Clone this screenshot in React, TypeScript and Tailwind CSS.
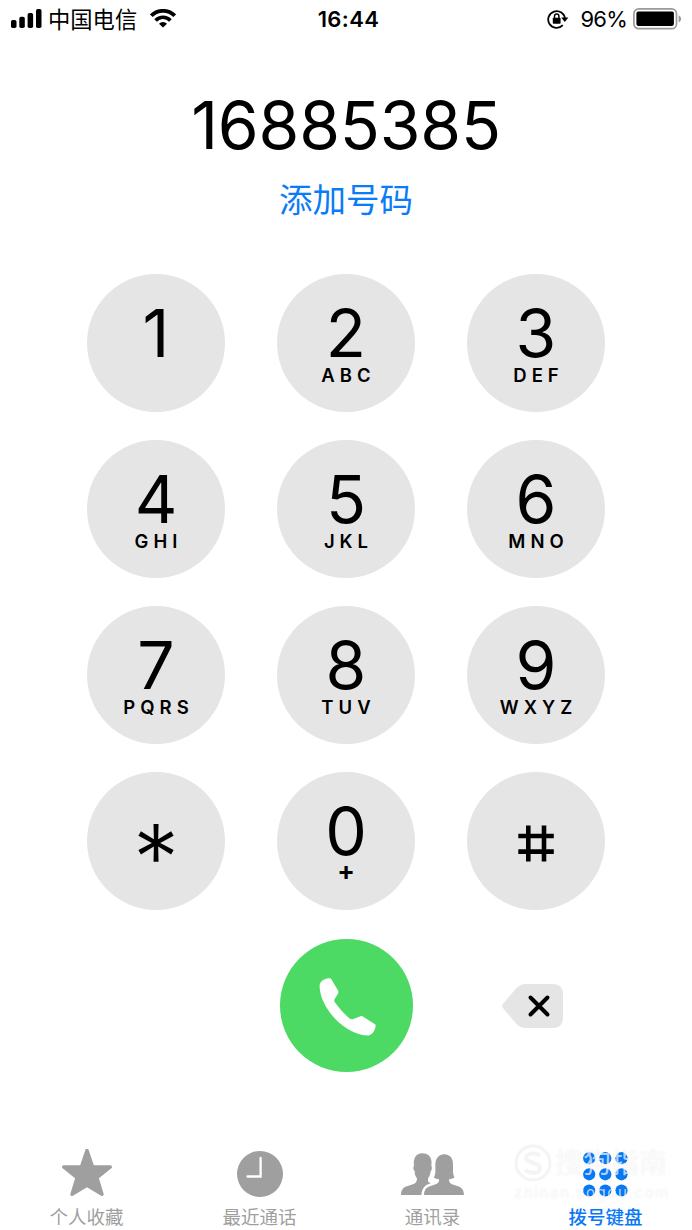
import type { ReactNode } from 'react';

type PadKey = { main: string; sub?: string };

const KEYS: PadKey[] = [
  { main: '1' },
  { main: '2', sub: 'ABC' },
  { main: '3', sub: 'DEF' },
  { main: '4', sub: 'GHI' },
  { main: '5', sub: 'JKL' },
  { main: '6', sub: 'MNO' },
  { main: '7', sub: 'PQRS' },
  { main: '8', sub: 'TUV' },
  { main: '9', sub: 'WXYZ' },
  { main: '*' },
  { main: '0', sub: '+' },
  { main: '#' },
];

function StatusBar() {
  return (
    <header className="grid h-[38px] grid-cols-3 items-center text-[22px] leading-none">
      <div className="flex items-center pl-[11px]">
        <svg width="31" height="19" viewBox="0 0 31 19">
          <rect x="0" y="11" width="5.5" height="8" rx="1.8" />
          <rect x="8.3" y="7.8" width="5.5" height="11.2" rx="1.8" />
          <rect x="16.6" y="4" width="5.5" height="15" rx="1.8" />
          <rect x="25" y="0" width="5.5" height="19" rx="1.8" />
        </svg>
        <span className="mt-[2px] ml-[6px] text-[22.3px]">中国电信</span>
        <svg className="ml-[13px]" width="26" height="19" viewBox="0 0 26 19" fill="none" stroke="#000">
          <path d="M1.3 6.7a16.5 16.5 0 0 1 23.4 0" strokeWidth="3.8" />
          <path d="M5.6 11.4a10.3 10.3 0 0 1 14.8 0" strokeWidth="3.6" />
          <path d="M13 18.6 9 14.7a5.7 5.7 0 0 1 8 0Z" fill="#000" stroke="none" />
        </svg>
      </div>
      <div className="pl-[5px] text-center font-semibold tracking-[0.4px]">16:44</div>
      <div className="flex items-center justify-end pr-[10px]">
        <svg width="22" height="20" viewBox="0 0 22 20" fill="none" stroke="#000" strokeWidth="1.8">
          <path d="M15.8 16.2A8.4 8.4 0 1 1 18 10" />
          <path d="m14.2 8.4 3.6 4.5 3.6-4.5Z" fill="#000" stroke="none" />
          <rect x="5.8" y="8.7" width="7.8" height="6" rx="0.8" fill="#000" stroke="none" />
          <path d="M7.5 9V7.3a2.2 2.2 0 0 1 4.4 0V9" strokeWidth="1.5" />
        </svg>
        <span className="ml-[12px] text-[22px] tracking-[-0.8px]">96%</span>
        <svg className="ml-[6px]" width="49" height="22" viewBox="0 0 49 22">
          <rect x="0.9" y="0.9" width="42.6" height="19.8" rx="4.8" fill="none" stroke="#9b9b9b" strokeWidth="1.7" />
          <rect x="3.4" y="3.6" width="37.5" height="14.3" rx="1.8" />
          <path d="M45.6 7.2c3.3 1.4 3.3 5.8 0 7.2Z" fill="#9b9b9b" />
        </svg>
      </div>
    </header>
  );
}

function KeyFace({ main, sub }: PadKey) {
  if (main === '*') {
    return <span className="mt-[40px] text-[92px] leading-[92px] font-light">*</span>;
  }
  if (main === '#') {
    return (
      <svg aria-label="#" className="mt-[53px]" width="36" height="37" viewBox="0 0 36 37" stroke="#000" strokeWidth="4.6">
        <path d="M10.3.5v36M26 .5v36M.3 11h35.5M.3 26.6h35.5" />
      </svg>
    );
  }
  return (
    <>
      <span className="mt-[26px] h-[65px] text-[66px] leading-[66px]">{main}</span>
      {sub === '+' ? (
        <span className="text-[26px] leading-[15px] font-bold">+</span>
      ) : (
        <span className="mt-px pl-[5px] text-[18.5px] leading-[18px] font-semibold tracking-[5px]">{sub}</span>
      )}
    </>
  );
}

function Keypad() {
  return (
    <div className="mx-auto mt-[54px] grid w-[518px] grid-cols-3 gap-x-[52px] gap-y-[28px]">
      {KEYS.map((k) => (
        <button key={k.main} className="flex size-[138px] flex-col items-center rounded-full bg-[#e5e5e5]">
          <KeyFace {...k} />
        </button>
      ))}
    </div>
  );
}

function CallRow() {
  return (
    <div className="mx-auto mt-[29px] grid w-[518px] grid-cols-3 items-center gap-x-[52px]">
      <span />
      <button className="size-[133px] justify-self-center rounded-full bg-[#4cd964]" aria-label="呼叫">
        <svg viewBox="28 27 400 400" fill="#fff">
          <path d="M177 145C164 145 149 151 147 167C147 200 165 235 192 265C222 297 262 318 295 317C308 314 314 300 316 288C316 285 314 283 310 281L277 260C274 258 270 258 266 261L247 268C243 269 240 268 236 265C220 250 203 232 193 217C190 213 191 210 193 207L203 190C204 187 204 186 203 183L183 149C181 146 180 145 177 145Z" />
        </svg>
      </button>
      <button className="justify-self-center" aria-label="删除">
        <svg className="ml-[-7px]" width="62" height="44" viewBox="0 0 62 44">
          <path d="M24 0H51C57.5 0 61 4 61 10.5V33.5C61 40 57.5 44 51 44H24C20 44 17 42.5 14 39.5L1.3 24.5Q-.7 22 1.3 19.5L14 4.5C17 1.5 20 0 24 0Z" fill="#e5e5e5" />
          <path d="m28.5 13.5 17 17m0-17-17 17" stroke="#000" strokeWidth="4" strokeLinecap="round" />
        </svg>
      </button>
    </div>
  );
}

function StarIcon() {
  return (
    <svg className="mb-[3px]" width="50" height="47" viewBox="95 42 150 141" fill="currentColor">
      <path
        d="M170 46 187 96H240L200 128 215 178 170 151 125 178 140 128 100 96H153Z"
        stroke="currentColor"
        strokeWidth="10"
        strokeLinejoin="round"
      />
    </svg>
  );
}

function ClockIcon() {
  return (
    <svg width="46" height="46" viewBox="0 0 46 46">
      <circle cx="23" cy="23" r="23" fill="currentColor" />
      <path d="M23.6 7v18.5H10.5" fill="none" stroke="#fff" strokeWidth="2.3" strokeLinecap="round" />
    </svg>
  );
}

function PeopleIcon() {
  return (
    <svg width="63" height="42" viewBox="63 54 189 126" fill="currentColor">
      <path d="M63 180C64 163 70 156 83 153L99 148C107 145 111 141 111 130C105 123 104 115 104 108C99 103 99 97 102 93C99 70 108 55 126 55C147 54 158 69 154 93C157 98 156 104 152 109C151 119 148 125 144 130V139C145 142 149 143 152 145C135 150 127 158 124 180Z" />
      <path d="M132 180C133 164 138 158 150 154L169 147C176 144 178 140 177 133C171 133 165 131 161 127C168 119 166 105 166 91C166 69 176 59 193 58C211 59 220 71 219 91C219 108 218 119 224 127C219 131 213 133 207 133C207 140 209 145 216 148L234 154C246 158 251 165 252 180Z" />
    </svg>
  );
}

function DotsIcon() {
  const steps = [6.2, 22.3, 38.5];
  return (
    <svg width="45" height="45" viewBox="0 0 45 45" fill="currentColor">
      {steps.map((y) => steps.map((x) => <circle key={`${x}-${y}`} cx={x} cy={y} r="6.1" />))}
    </svg>
  );
}

function Tab({ label, icon, active }: { label: string; icon: ReactNode; active?: boolean }) {
  return (
    <button
      className={
        active
          ? 'flex w-[173px] flex-col items-center font-medium text-[#0879f5]'
          : 'flex w-[173px] flex-col items-center text-[#9f9f9f]'
      }
    >
      <span className="flex h-[52px] items-center">{icon}</span>
      <span className="mt-[7px] text-[18.5px] leading-[20px]">{label}</span>
    </button>
  );
}

// translucent site mark laid over the last tab
function Watermark() {
  return (
    <div className="pointer-events-none absolute right-[22px] bottom-[29px] w-[156px] text-white/70 [text-shadow:0_0_2px_rgba(0,0,0,0.08)]">
      <div className="flex items-center gap-[3px]">
        <svg width="38" height="38" viewBox="0 0 38 38" fill="none" stroke="#f4f4f4">
          <circle cx="19" cy="19" r="17" strokeWidth="3" />
          <path d="M26 12c-4-4-14-3-14 2s14 4 14 10-10 6-15 2" strokeWidth="4" />
        </svg>
        <span className="text-[28px] leading-[38px] font-normal">搜狗指南</span>
      </div>
      <div className="mt-[3px] text-[15px] leading-[16px] font-normal tracking-[1.6px]">zhinan.sogou.com</div>
    </div>
  );
}

export default function App() {
  return (
    <main className="relative flex h-[1230px] w-[692px] flex-col overflow-hidden bg-white font-[Inter,'Noto_Sans_CJK_SC',sans-serif] text-black">
      <StatusBar />
      <div className="mt-[54px] text-center text-[66px] leading-[66px] tracking-[-0.2px]">16885385</div>
      <button className="mx-auto mt-[22px] h-[40px] text-[33.5px] leading-[40px] text-[#0a7cf7]">添加号码</button>
      <Keypad />
      <CallRow />
      <nav className="mt-auto flex h-[82px]">
        <Tab label="个人收藏" icon={<StarIcon />} />
        <Tab label="最近通话" icon={<ClockIcon />} />
        <Tab label="通讯录" icon={<PeopleIcon />} />
        <Tab label="拨号键盘" icon={<DotsIcon />} active />
      </nav>
      <Watermark />
    </main>
  );
}
